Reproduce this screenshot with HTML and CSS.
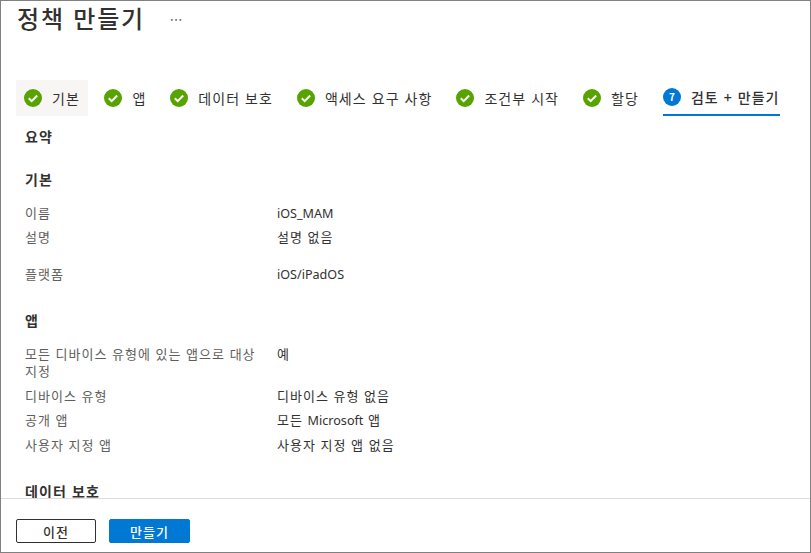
FILE: index.html
```html
<!DOCTYPE html>
<html lang="ko">
<head>
  <meta charset="UTF-8">
  <title>정책 만들기</title>
  <link rel="stylesheet" href="styles.css">
</head>
<body>
  <div class="blade">
    <div class="blade-head">
      <h1>정책 만들기</h1>
      <span class="more">...</span>
    </div>

    <div class="tabs">
      <div class="tab first">
        <svg class="check" viewBox="0 0 18 18"><circle cx="9" cy="9" r="9"/><path d="M4.8 9.2l2.9 2.9 5.5-5.6"/></svg>
        <span>기본</span>
      </div>
      <div class="tab">
        <svg class="check" viewBox="0 0 18 18"><circle cx="9" cy="9" r="9"/><path d="M4.8 9.2l2.9 2.9 5.5-5.6"/></svg>
        <span>앱</span>
      </div>
      <div class="tab">
        <svg class="check" viewBox="0 0 18 18"><circle cx="9" cy="9" r="9"/><path d="M4.8 9.2l2.9 2.9 5.5-5.6"/></svg>
        <span>데이터 보호</span>
      </div>
      <div class="tab">
        <svg class="check" viewBox="0 0 18 18"><circle cx="9" cy="9" r="9"/><path d="M4.8 9.2l2.9 2.9 5.5-5.6"/></svg>
        <span>액세스 요구 사항</span>
      </div>
      <div class="tab">
        <svg class="check" viewBox="0 0 18 18"><circle cx="9" cy="9" r="9"/><path d="M4.8 9.2l2.9 2.9 5.5-5.6"/></svg>
        <span>조건부 시작</span>
      </div>
      <div class="tab">
        <svg class="check" viewBox="0 0 18 18"><circle cx="9" cy="9" r="9"/><path d="M4.8 9.2l2.9 2.9 5.5-5.6"/></svg>
        <span>할당</span>
      </div>
      <div class="tab active">
        <span class="step">7</span>
        <span>검토 + 만들기</span>
      </div>
    </div>

    <div class="content">
      <h2 class="summary">요약</h2>

      <h3>기본</h3>
      <div class="row"><div class="label">이름</div><div class="value latin">iOS_MAM</div></div>
      <div class="row gap-after"><div class="label">설명</div><div class="value">설명 없음</div></div>
      <div class="row"><div class="label">플랫폼</div><div class="value latin">iOS/iPadOS</div></div>

      <h3 class="apps">앱</h3>
      <div class="row tall"><div class="label">모든 디바이스 유형에 있는 앱으로 대상 지정</div><div class="value">예</div></div>
      <div class="row"><div class="label">디바이스 유형</div><div class="value">디바이스 유형 없음</div></div>
      <div class="row"><div class="label">공개 앱</div><div class="value">모든 <span class="latin">Microsoft</span> 앱</div></div>
      <div class="row"><div class="label">사용자 지정 앱</div><div class="value">사용자 지정 앱 없음</div></div>

      <h3 class="data">데이터 보호</h3>
    </div>

    <div class="footer">
      <button class="btn">이전</button>
      <button class="btn primary">만들기</button>
    </div>
  </div>
</body>
</html>
```

FILE: styles.css
```css
* {
  box-sizing: border-box;
}
html, body {
  margin: 0;
  height: 100%;
}
body {
  font-family: "Noto Sans CJK KR", "Noto Sans", sans-serif;
  font-size: 13px;
  letter-spacing: 1px;
  color: #323130;
  background: white;
}
.blade {
  height: 553px;
  border: 1px solid #808080;
  display: flex;
  flex-direction: column;
  overflow: hidden;
}
.blade-head {
  height: 79px;
  padding: 0 0 0 16px;
  display: flex;
  align-items: flex-start;
  flex: none;
}
h1 {
  margin: 0;
  font-size: 24px;
  line-height: 34px;
  font-weight: 500;
  letter-spacing: 1.8px;
}
.more {
  margin: 5px 0 0 25px;
  color: #605e5c;
  font-size: 13px;
  letter-spacing: 0.6px;
}
.tabs {
  display: flex;
  flex: none;
  height: 36px;
  padding-left: 15px;
  gap: 8px;
  font-size: 14px;
  letter-spacing: 1.05px;
}
.tab {
  display: flex;
  align-items: center;
  gap: 10px;
  padding: 0 8px;
  white-space: nowrap;
}
.tab.first {
  background: #f7f6f5;
  padding-right: 8.5px;
}
.tab.active {
  font-weight: 500;
  padding: 0;
  margin-left: 8px;
  border-bottom: 2px solid #0078d4;
}
.check {
  width: 18px;
  height: 18px;
  flex: none;
}
.check circle {
  fill: #57a300;
}
.check path {
  fill: none;
  stroke: white;
  stroke-width: 2;
}
.step {
  width: 18px;
  height: 18px;
  flex: none;
  border-radius: 50%;
  background: #0078d4;
  color: white;
  font-size: 10px;
  font-weight: 700;
  letter-spacing: 0;
  line-height: 18px;
  text-align: center;
}
.content {
  flex: 1;
  min-height: 0;
  overflow: hidden;
  padding: 10px 24px 0;
}
h2, h3 {
  margin: 0;
  font-size: 14px;
  line-height: 20px;
  font-weight: 700;
  letter-spacing: 1.1px;
}
h3 {
  margin-top: 23px;
  margin-bottom: 12px;
}
h3.apps {
  margin-top: 24px;
  margin-bottom: 12px;
}
h3.data {
  margin-top: 24px;
}
.row {
  display: grid;
  grid-template-columns: 252px 1fr;
  line-height: 17px;
  padding: 3px 0 4px;
}
.row.tall {
  padding-bottom: 5px;
}
.row.gap-after {
  margin-bottom: 13px;
}
.label {
  color: #605e5c;
  width: 240px;
}
.latin {
  font-family: "Noto Sans", sans-serif;
  font-size: 12.6px;
  letter-spacing: 0;
}
.value.latin {
  margin: 1px 0 -1px;
}
.footer {
  flex: none;
  height: 54px;
  border-top: 1px solid #dcdcdc;
  padding: 20px 0 0 15px;
  display: flex;
  align-items: flex-start;
  gap: 13px;
  background: white;
}
.btn {
  font: inherit;
  letter-spacing: inherit;
  font-weight: 500;
  height: 24px;
  width: 80px;
  padding: 0;
  background: white;
  color: #323130;
  border: 1px solid #323130;
  border-radius: 2px;
}
.btn.primary {
  width: 81px;
  background: #0078d4;
  border-color: #0078d4;
  color: white;
}
```
